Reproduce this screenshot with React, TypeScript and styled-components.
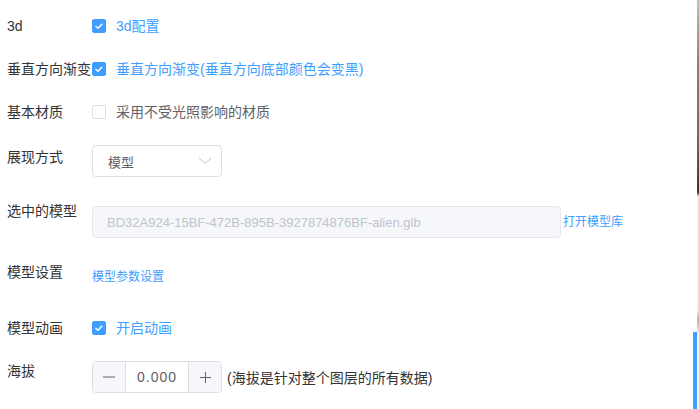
import React from "react";
import styled, { createGlobalStyle } from "styled-components";

const GlobalStyle = createGlobalStyle`
  html, body { margin: 0; padding: 0; background: #fff; overflow: hidden; }
  body { font-family: "Liberation Sans", "Noto Sans CJK SC", sans-serif; }
  * { box-sizing: border-box; }
`;

const Page = styled.div`
  width: 699px;
  height: 409px;
  position: relative;
  overflow: hidden;
  background: #fff;
`;

const Form = styled.div`
  display: flex;
  flex-direction: column;
  padding: 16px 0 0 7px;
`;

const Row = styled.div<{ $mt?: number; $align?: string }>`
  display: flex;
  align-items: ${(p) => p.$align ?? "flex-start"};
  margin-top: ${(p) => p.$mt ?? 0}px;
`;

const Label = styled.div<{ $pt?: number }>`
  width: 85px;
  flex: none;
  font-size: 14px;
  line-height: 20px;
  color: #333;
  white-space: nowrap;
  padding-top: ${(p) => p.$pt ?? 0}px;
`;

const Control = styled.div<{ $pt?: number }>`
  display: flex;
  align-items: center;
  padding-top: ${(p) => p.$pt ?? 0}px;
`;

const CheckBox = styled.span<{ $checked?: boolean }>`
  width: 14px;
  height: 14px;
  border-radius: 2px;
  border: 1px solid ${(p) => (p.$checked ? "#409eff" : "#dcdfe6")};
  background: ${(p) => (p.$checked ? "#409eff" : "#fff")};
  display: inline-flex;
  align-items: center;
  justify-content: center;
  flex: none;
`;

const CheckText = styled.span<{ $checked?: boolean }>`
  margin-left: 10px;
  font-size: 14px;
  line-height: 20px;
  color: ${(p) => (p.$checked ? "#409eff" : "#606266")};
  white-space: nowrap;
`;

const Check = ({ checked, children }: { checked?: boolean; children: React.ReactNode }) => (
  <Control>
    <CheckBox $checked={checked}>
      {checked && (
        <svg width="12" height="12" viewBox="0 0 12 12">
          <polyline points="2.5,6 5,8.3 9.3,3.7" fill="none" stroke="#fff" strokeWidth="1.3" />
        </svg>
      )}
    </CheckBox>
    <CheckText $checked={checked}>{children}</CheckText>
  </Control>
);

const Select = styled.div`
  width: 130px;
  height: 32px;
  border: 1px solid #dcdfe6;
  border-radius: 4px;
  display: flex;
  align-items: center;
  justify-content: space-between;
  padding: 0 9px 0 15px;
  font-size: 13px;
  color: #606266;
`;

const TextInput = styled.div`
  width: 469px;
  height: 32px;
  border: 1px solid #e4e7ed;
  border-radius: 4px;
  background: #f5f7fa;
  display: flex;
  align-items: center;
  padding: 0 14px;
  font-size: 13px;
  color: #c0c4cc;
  white-space: nowrap;
`;

const Link = styled.span<{ $ml?: number }>`
  font-size: 12px;
  line-height: 20px;
  color: #409eff;
  margin-left: ${(p) => p.$ml ?? 0}px;
  white-space: nowrap;
  cursor: pointer;
`;

const NumberBox = styled.div`
  width: 130px;
  height: 32px;
  border: 1px solid #dcdfe6;
  border-radius: 4px;
  display: flex;
  overflow: hidden;
`;

const StepButton = styled.div<{ $side: "left" | "right" }>`
  width: 33px;
  flex: none;
  background: #f5f7fa;
  display: flex;
  align-items: center;
  justify-content: center;
  ${(p) => (p.$side === "left" ? "border-right" : "border-left")}: 1px solid #dcdfe6;
`;

const NumberValue = styled.div`
  flex: 1;
  display: flex;
  align-items: center;
  justify-content: center;
  font-size: 14px;
  letter-spacing: 1px;
  color: #606266;
`;

const Note = styled.span`
  margin-left: 5px;
  font-size: 14px;
  color: #333;
  white-space: nowrap;
`;

const EdgeStrip = styled.div`
  position: absolute;
  right: 0;
  top: 0;
  bottom: 0;
  width: 2px;
  background: linear-gradient(
    to bottom,
    #b9c3c8 0%,
    #8d7f77 15%,
    #6f6660 35%,
    #3a3330 47%,
    #efe9e3 48%,
    #efe9e3 76%,
    #b5b0ab 78%,
    #f4f1ee 82%,
    #f4f1ee 100%
  );
`;

const ScrollThumb = styled.div`
  position: absolute;
  right: 2px;
  top: 332px;
  bottom: 0;
  width: 4px;
  background: #409eff;
`;

export default function App() {
  return (
    <Page>
      <GlobalStyle />
      <Form>
        <Row $align="center">
          <Label>3d</Label>
          <Check checked>3d配置</Check>
        </Row>
        <Row $align="center" $mt={23}>
          <Label>垂直方向渐变</Label>
          <Check checked>垂直方向渐变(垂直方向底部颜色会变黑)</Check>
        </Row>
        <Row $align="center" $mt={23}>
          <Label>基本材质</Label>
          <Check>采用不受光照影响的材质</Check>
        </Row>
        <Row $mt={23}>
          <Label $pt={2}>展现方式</Label>
          <Select>
            <span>模型</span>
            <svg width="14" height="8" viewBox="0 0 14 8">
              <polyline points="1,1 7,6.5 13,1" fill="none" stroke="#c0c4cc" strokeWidth="1" />
            </svg>
          </Select>
        </Row>
        <Row $mt={24}>
          <Label>选中的模型</Label>
          <Control $pt={5}>
            <TextInput>BD32A924-15BF-472B-895B-3927874876BF-alien.glb</TextInput>
            <Link $ml={2}>打开模型库</Link>
          </Control>
        </Row>
        <Row $mt={24}>
          <Label>模型设置</Label>
          <Control $pt={5}>
            <Link>模型参数设置</Link>
          </Control>
        </Row>
        <Row $align="center" $mt={31}>
          <Label>模型动画</Label>
          <Check checked>开启动画</Check>
        </Row>
        <Row $mt={23}>
          <Label>海拔</Label>
          <Control>
            <NumberBox>
              <StepButton $side="left">
                <svg width="12" height="2" viewBox="0 0 12 2">
                  <line x1="0" y1="1" x2="12" y2="1" stroke="#606266" strokeWidth="1" />
                </svg>
              </StepButton>
              <NumberValue>0.000</NumberValue>
              <StepButton $side="right">
                <svg width="11" height="11" viewBox="0 0 11 11">
                  <line x1="0" y1="5.5" x2="11" y2="5.5" stroke="#606266" strokeWidth="1" />
                  <line x1="5.5" y1="0" x2="5.5" y2="11" stroke="#606266" strokeWidth="1" />
                </svg>
              </StepButton>
            </NumberBox>
            <Note>(海拔是针对整个图层的所有数据)</Note>
          </Control>
        </Row>
      </Form>
      <EdgeStrip />
      <ScrollThumb />
    </Page>
  );
}
